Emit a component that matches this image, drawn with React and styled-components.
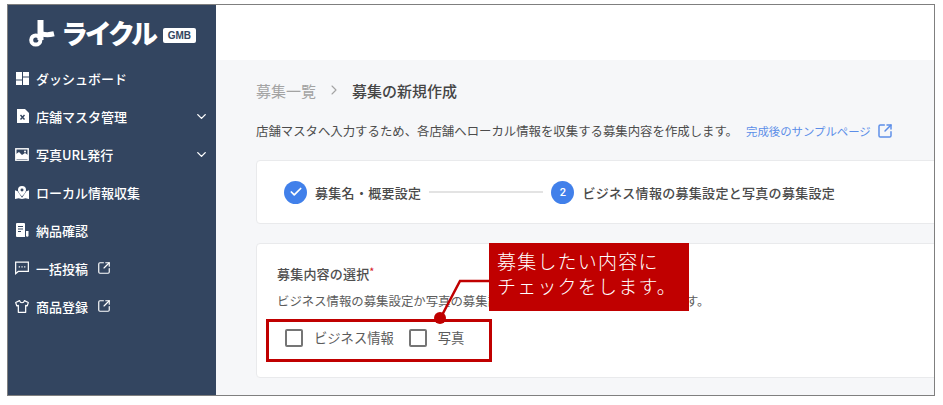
import React from "react";
import styled, { createGlobalStyle } from "styled-components";
import { ChevronDown, ChevronRight, SquareArrowOutUpRight, Check } from "lucide-react";

const Global = createGlobalStyle`
  html, body { margin: 0; padding: 0; background: #fff; }
  body { font-family: "Noto Sans CJK JP", "Noto Sans", sans-serif; }
  * { box-sizing: border-box; }
`;

const Frame = styled.div`
  position: relative;
  display: flex;
  width: 928px;
  height: 392px;
  margin: 4px 0 0 7px;
  border: 1px solid #7f7f7f;
  overflow: hidden;
  background: #fff;
`;

const Sidebar = styled.aside`
  flex: 0 0 208px;
  background: #334560;
  color: #fff;
`;

const Brand = styled.div`
  display: flex;
  align-items: center;
  height: 54px;
  padding: 2px 0 0 21px;
`;

const BrandName = styled.span`
  margin-left: 6px;
  font-size: 27px;
  line-height: 30px;
  font-weight: 900;
  letter-spacing: -3.2px;
  color: #fff;
`;

const BrandBadge = styled.span`
  margin: 4px 0 0 8px;
  height: 15px;
  width: 33px;
  border-radius: 2px;
  background: #fff;
  color: #334560;
  font: 700 10px/15px "Liberation Sans", sans-serif;
  text-align: center;
`;

const Nav = styled.nav`
  display: flex;
  flex-direction: column;
`;

const NavItem = styled.div`
  display: flex;
  align-items: center;
  height: 38px;
  padding: 0 7px 0 7px;
  font-size: 13px;
  font-weight: 500;
`;

const NavIcon = styled.span`
  display: flex;
  justify-content: center;
  flex: 0 0 14px;
  min-width: 0;
  margin-right: 7px;
`;

const NavLabel = styled.span`
  white-space: nowrap;
`;

const NavExternal = styled.span`
  display: flex;
  margin-left: 9px;
`;

const NavChevron = styled.span`
  display: flex;
  margin-left: auto;
`;

const Main = styled.main`
  flex: 1;
  min-width: 0;
  display: flex;
  flex-direction: column;
  overflow: hidden;
`;

const Header = styled.header`
  flex: 0 0 55px;
  background: #fff;
`;

const Content = styled.div`
  flex: 1;
  width: 760px;
  padding: 0 0 0 40px;
  background: #f6f7f9;
`;

const ContentWrap = styled.div`
  flex: 1;
  display: flex;
  background: #f6f7f9;
`;

const Crumbs = styled.div`
  display: flex;
  align-items: center;
  height: 30px;
  margin-top: 15px;
  font-size: 15px;
  white-space: nowrap;
`;

const CrumbLink = styled.span`
  color: #a3a3a3;
`;

const CrumbSep = styled.span`
  display: flex;
  margin: 0 10px 0 10px;
  color: #a3a3a3;
`;

const CrumbCurrent = styled.span`
  color: #454545;
  font-weight: 500;
`;

const Lead = styled.div`
  display: flex;
  align-items: center;
  width: 680px;
  height: 24px;
  margin-top: 14px;
  font-size: 12.4px;
  color: #4c4c4c;
  white-space: nowrap;
`;

const SampleLink = styled.a`
  display: flex;
  align-items: center;
  margin-left: 8px;
  font-size: 11.4px;
  color: #5c8ee8;
  gap: 6px;
`;

const Card = styled.section`
  width: 760px;
  margin-top: ${(p) => p.$gap}px;
  background: #fff;
  border: 1px solid #e9eaec;
  border-radius: 4px;
`;

const Stepper = styled.div`
  display: flex;
  align-items: center;
  height: 62px;
  padding-left: 27px;
`;

const StepCircle = styled.span`
  display: flex;
  align-items: center;
  justify-content: center;
  width: 23px;
  height: 23px;
  border-radius: 50%;
  background: #4180ea;
  color: #fff;
  font: 500 11px "Roboto", sans-serif;
`;

const StepLabel = styled.span`
  margin-left: 8px;
  font-size: 13px;
  letter-spacing: 0.3px;
  font-weight: 500;
  color: #4a4a4a;
  white-space: nowrap;
`;

const StepLine = styled.span`
  width: 114px;
  height: 2px;
  margin: 0 8px 0 8px;
  background: #e3e3e3;
`;

const FormCard = styled.div`
  padding: 18px 20px 0;
  height: 133px;
`;

const FieldLabel = styled.div`
  font-size: 13px;
  line-height: 20px;
  letter-spacing: 0.2px;
  font-weight: 500;
  color: #4f4f4f;
`;

const Required = styled.span`
  color: #d8262c;
  font-size: 9px;
  font-weight: 700;
  vertical-align: 4px;
`;

const Help = styled.div`
  margin-top: 8px;
  font-size: 12.4px;
  line-height: 18px;
  color: #5c5c5c;
  white-space: nowrap;
`;

const Options = styled.div`
  display: flex;
  margin: 18px 0 0 8px;
`;

const Option = styled.label`
  display: flex;
  align-items: center;
  margin-right: 15px;
  font-size: 13.3px;
  line-height: 20px;
  color: #5c5c5c;
`;

const Box = styled.span`
  width: 18px;
  height: 18px;
  margin-right: 11px;
  border: 2px solid #757575;
  border-radius: 2px;
`;

const Callout = styled.div`
  position: absolute;
  left: 481px;
  top: 238px;
  width: 200px;
  height: 68px;
  padding: 5px 8px;
  background: #c00000;
  color: #fff;
  font-size: 19px;
  line-height: 25px;
  letter-spacing: 1.2px;
  white-space: nowrap;
  font-weight: 300;
`;

const Highlight = styled.div`
  position: absolute;
  left: 258px;
  top: 314px;
  width: 226px;
  height: 43px;
  border: 3px solid #c00000;
`;

const Leader = styled.svg`
  position: absolute;
  left: 420px;
  top: 270px;
  overflow: visible;
`;

const LogoMark = () => (
  <svg width="26" height="27" viewBox="0 0 26 27" fill="none" stroke="#fff">
    <path d="M11.5 0v20" strokeWidth="6" />
    <circle cx="6.8" cy="20" r="4.6" strokeWidth="4" />
    <path d="M13 14c4 1 8 .8 12-.2" strokeWidth="5" />
  </svg>
);

const DashIcon = () => (
  <svg width="13" height="13" viewBox="0 0 13 13" fill="#fff">
    <rect x="0" y="0" width="6" height="7.5" />
    <rect x="7" y="0" width="6" height="4.5" />
    <rect x="0" y="8.5" width="6" height="4.5" />
    <rect x="7" y="5.5" width="6" height="7.5" />
  </svg>
);

const FileXIcon = () => (
  <svg width="13" height="14" viewBox="0 0 13 14">
    <path d="M1 0h8l4 4v10H1z" fill="#fff" />
    <path d="M4.5 6l4 4.5M8.5 6l-4 4.5" stroke="#334560" strokeWidth="1.4" />
  </svg>
);

const PhotoIcon = () => (
  <svg width="14" height="13" viewBox="0 0 14 13">
    <rect x=".8" y=".8" width="12.4" height="11.4" fill="none" stroke="#fff" strokeWidth="1.4" />
    <path d="M1 11V6l3-2 3 3 3-2 3 2v4z" fill="#fff" />
    <circle cx="10" cy="3.5" r="1" fill="#fff" />
  </svg>
);

const MapPinIcon = () => (
  <svg width="16" height="15" viewBox="0 0 16 15">
    <path d="M8 0a4.6 4.6 0 0 1 4.6 4.6C12.6 7.5 8 12 8 12S3.4 7.5 3.4 4.6A4.6 4.6 0 0 1 8 0z" fill="#fff" />
    <circle cx="8" cy="4.6" r="1.7" fill="#334560" />
    <path d="M0 5l3 1 5 7.5L13 6l3-1v10l-4-1-4 1-4-1-4 1z" fill="#fff" />
  </svg>
);

const ReceiptIcon = () => (
  <svg width="14" height="14" viewBox="0 0 14 14">
    <path d="M1 1a1 1 0 0 1 1-1h7a1 1 0 0 1 1 1v13H2a1 1 0 0 1-1-1z" fill="#fff" />
    <path d="M11 8h2.500v4.500a1.200 1.200 0 0 1-2.500 0z" fill="#fff" />
    <path d="M3 3.500h5M3 6h5M3 8.500h3" stroke="#334560" strokeWidth="1.2" />
  </svg>
);

const ChatIcon = () => (
  <svg width="15" height="14" viewBox="0 0 15 14" fill="none" stroke="#fff" strokeWidth="1.3">
    <path d="M.7.7h13.600v10H3.500L.7 13z" />
    <path d="M4 5.700h1.300M6.900 5.700h1.300M9.800 5.700h1.300" strokeWidth="1.3" />
  </svg>
);

const ShirtIcon = () => (
  <svg width="16" height="15" viewBox="0 0 16 15" fill="none" stroke="#fff" strokeWidth="1.4" strokeLinejoin="round">
    <path d="M5.200.8C5.600 2.400 6.600 3.200 8 3.200S10.400 2.400 10.800.8L15.200 3 14 6.800 12.200 6.200V14.200H3.800V6.200L2 6.800.8 3z" />
  </svg>
);

const items = [
  { label: "ダッシュボード", icon: <DashIcon /> },
  { label: "店舗マスタ管理", icon: <FileXIcon />, more: true },
  { label: "写真URL発行", icon: <PhotoIcon />, more: true },
  { label: "ローカル情報収集", icon: <MapPinIcon /> },
  { label: "納品確認", icon: <ReceiptIcon /> },
  { label: "一括投稿", icon: <ChatIcon />, ext: true },
  { label: "商品登録", icon: <ShirtIcon />, ext: true },
];

export default function App() {
  return (
    <>
      <Global />
      <Frame>
        <Sidebar>
          <Brand>
            <LogoMark />
            <BrandName>ライクル</BrandName>
            <BrandBadge>GMB</BrandBadge>
          </Brand>
          <Nav>
            {items.map((it) => (
              <NavItem key={it.label}>
                <NavIcon>{it.icon}</NavIcon>
                <NavLabel>{it.label}</NavLabel>
                {it.ext && (
                  <NavExternal>
                    <SquareArrowOutUpRight size={14} strokeWidth={2} />
                  </NavExternal>
                )}
                {it.more && (
                  <NavChevron>
                    <ChevronDown size={15} strokeWidth={2.2} />
                  </NavChevron>
                )}
              </NavItem>
            ))}
          </Nav>
        </Sidebar>
        <Main>
          <Header />
          <ContentWrap>
            <Content>
              <Crumbs>
                <CrumbLink>募集一覧</CrumbLink>
                <CrumbSep>
                  <ChevronRight size={16} strokeWidth={1.6} />
                </CrumbSep>
                <CrumbCurrent>募集の新規作成</CrumbCurrent>
              </Crumbs>
              <Lead>
                店舗マスタへ入力するため、各店舗へローカル情報を収集する募集内容を作成します。
                <SampleLink>
                  完成後のサンプルページ
                  <SquareArrowOutUpRight size={16} strokeWidth={2.2} />
                </SampleLink>
              </Lead>
              <Card $gap={17}>
                <Stepper>
                  <StepCircle>
                    <Check size={14} strokeWidth={3} />
                  </StepCircle>
                  <StepLabel>募集名・概要設定</StepLabel>
                  <StepLine />
                  <StepCircle>2</StepCircle>
                  <StepLabel>ビジネス情報の募集設定と写真の募集設定</StepLabel>
                </Stepper>
              </Card>
              <Card $gap={19}>
                <FormCard>
                  <FieldLabel>
                    募集内容の選択<Required>*</Required>
                  </FieldLabel>
                  <Help>ビジネス情報の募集設定か写真の募集設定、もしくはその両方を選択します。</Help>
                  <Options>
                    <Option>
                      <Box />
                      ビジネス情報
                    </Option>
                    <Option>
                      <Box />
                      写真
                    </Option>
                  </Options>
                </FormCard>
              </Card>
            </Content>
          </ContentWrap>
        </Main>
        <Highlight />
        <Leader width="70" height="50" viewBox="0 0 70 50" fill="none">
          <path d="M61 6H32L12 44" stroke="#c00000" strokeWidth="2.5" />
          <circle cx="12" cy="43" r="6" fill="#c00000" />
        </Leader>
        <Callout>
          募集したい内容に
          <br />
          チェックをします。
        </Callout>
      </Frame>
    </>
  );
}
